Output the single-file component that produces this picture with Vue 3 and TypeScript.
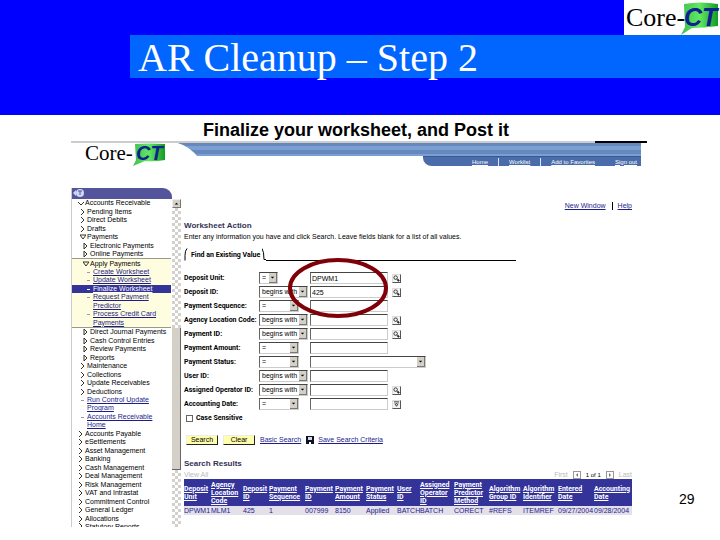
<script setup lang="ts">
import { ref } from 'vue'

interface MenuItem { text: string; kind: 'closed' | 'open' | 'link' | 'more'; level: number; current?: boolean }
interface Field { id: string; label: string; op: string; size: 'tiny' | 'short' | 'long'; value: string; tool?: 'lookup' | 'date'; list?: boolean }

const c = (text: string, level: number): MenuItem => ({ text, kind: 'closed', level })
const topMenu: MenuItem[] = [
  { text: 'Accounts Receivable', kind: 'open', level: 0 },
  c('Pending Items', 1), c('Direct Debits', 1), c('Drafts', 1),
  { text: 'Payments', kind: 'open', level: 1 },
  c('Electronic Payments', 2), c('Online Payments', 2),
]
const applyMenu: MenuItem[] = [
  { text: 'Apply Payments', kind: 'open', level: 2 },
  { text: 'Create Worksheet', kind: 'link', level: 3 },
  { text: 'Update Worksheet', kind: 'link', level: 3 },
  { text: 'Finalize Worksheet', kind: 'link', level: 3, current: true },
  { text: 'Request Payment', kind: 'link', level: 3 },
  { text: 'Predictor', kind: 'more', level: 3 },
  { text: 'Process Credit Card', kind: 'link', level: 3 },
  { text: 'Payments', kind: 'more', level: 3 },
]
const restMenu: MenuItem[] = [
  c('Direct Journal Payments', 2), c('Cash Control Entries', 2), c('Review Payments', 2), c('Reports', 2),
  c('Maintenance', 1), c('Collections', 1), c('Update Receivables', 1), c('Deductions', 1),
  { text: 'Run Control Update', kind: 'link', level: 1 },
  { text: 'Program', kind: 'more', level: 1 },
  { text: 'Accounts Receivable', kind: 'link', level: 1 },
  { text: 'Home', kind: 'more', level: 1 },
  c('Accounts Payable', 0), c('eSettlements', 0), c('Asset Management', 0), c('Banking', 0),
  c('Cash Management', 0), c('Deal Management', 0), c('Risk Management', 0), c('VAT and Intrastat', 0),
  c('Commitment Control', 0), c('General Ledger', 0), c('Allocations', 0), c('Statutory Reports', 0),
]
const menus = [
  { name: 'top', items: topMenu },
  { name: 'apply', items: applyMenu },
  { name: 'rest', items: restMenu },
]

const fields = ref<Field[]>([
  { id: 'unit', label: 'Deposit Unit:', op: '=', size: 'tiny', value: 'DPWM1', tool: 'lookup' },
  { id: 'deposit', label: 'Deposit ID:', op: 'begins with', size: 'long', value: '425', tool: 'lookup' },
  { id: 'sequence', label: 'Payment Sequence:', op: '=', size: 'short', value: '' },
  { id: 'agency', label: 'Agency Location Code:', op: 'begins with', size: 'long', value: '', tool: 'lookup' },
  { id: 'payment', label: 'Payment ID:', op: 'begins with', size: 'long', value: '', tool: 'lookup' },
  { id: 'amount', label: 'Payment Amount:', op: '=', size: 'short', value: '' },
  { id: 'status', label: 'Payment Status:', op: '=', size: 'short', value: '', list: true },
  { id: 'user', label: 'User ID:', op: 'begins with', size: 'long', value: '' },
  { id: 'operator', label: 'Assigned Operator ID:', op: 'begins with', size: 'long', value: '', tool: 'lookup' },
  { id: 'date', label: 'Accounting Date:', op: '=', size: 'short', value: '', tool: 'date' },
])

const columns: { width: number; lines: string[]; value: string }[] = [
  { width: 27, lines: ['Deposit', 'Unit'], value: 'DPWM1' },
  { width: 32, lines: ['Agency', 'Location', 'Code'], value: 'MLM1' },
  { width: 26, lines: ['Deposit', 'ID'], value: '425' },
  { width: 36, lines: ['Payment', 'Sequence'], value: '1' },
  { width: 30, lines: ['Payment', 'ID'], value: '007999' },
  { width: 31, lines: ['Payment', 'Amount'], value: '8150' },
  { width: 31, lines: ['Payment', 'Status'], value: 'Applied' },
  { width: 23, lines: ['User', 'ID'], value: 'BATCH' },
  { width: 34, lines: ['Assigned', 'Operator', 'ID'], value: 'BATCH' },
  { width: 35, lines: ['Payment', 'Predictor', 'Method'], value: 'CORECT' },
  { width: 34, lines: ['Algorithm', 'Group ID'], value: '#REFS' },
  { width: 35, lines: ['Algorithm', 'Identifier'], value: 'ITEMREF' },
  { width: 36, lines: ['Entered', 'Date'], value: '09/27/2004' },
  { width: 38, lines: ['Accounting', 'Date'], value: '09/28/2004' },
]
const total = columns.reduce((sum, col) => sum + col.width, 0)
</script>

<template>
  <div class="slide">
    <header class="masthead">
      <svg class="brand" viewBox="0 0 96 35" role="img" aria-label="Core-CT">
        <defs>
          <linearGradient id="leaf" x1="0" x2="1" y1="0" y2="0">
            <stop offset="0" stop-color="#3fbf4f" /><stop offset=".5" stop-color="#62e862" /><stop offset="1" stop-color="#159a25" />
          </linearGradient>
        </defs>
        <rect width="96" height="35" fill="#fff" />
        <path d="M60 4 Q76 1 94 4 L94 26 Q80 28 68 28 L57 35 L61 27 Z" fill="url(#leaf)" />
        <text x="2" y="26" class="brand-word" font-size="26">Core-</text>
        <text x="60" y="26" class="brand-mark" font-size="25">CT</text>
      </svg>
      <div class="band"><h1>AR Cleanup – Step 2</h1></div>
    </header>

    <h2 class="caption">Finalize your worksheet, and Post it</h2>

    <div class="content">
      <section class="window">
        <div class="rule"></div>
        <div class="app-top">
          <svg class="small-brand" viewBox="0 0 82 24" role="img" aria-label="Core-CT">
            <path d="M50 1 Q63 0 80 1 L80 17 Q68 19 60 18 L48 23 L51 17 Z" fill="url(#leaf)" />
            <text x="0" y="17" class="brand-word" font-size="21">Core-</text>
            <text x="51" y="17" class="brand-mark" font-size="20">CT</text>
          </svg>
          <div class="banner">
            <svg class="swoosh" viewBox="0 0 22 13" aria-hidden="true">
              <path d="M0 0H22V13H19Q12 4 0 0Z" fill="#7b9fd4" /><path d="M0 0H22V3H8Q4 1 0 0Z" fill="#6688bb" /><path d="M13 7H22V11H18Z" fill="#6688bb" />
            </svg>
            <div class="stripes"></div>
            <nav class="links">
              <a href="#">Home</a><span></span><a href="#">Worklist</a><span></span><a href="#">Add to Favorites</a><a href="#" class="out">Sign out</a>
            </nav>
          </div>
        </div>

        <div class="app-body">
          <nav class="sidebar">
            <div class="side-head">
              <svg viewBox="0 0 12 10" aria-hidden="true"><path d="M3 2L0 5L3 8Z" fill="#ccd8f4" /><circle cx="7" cy="5" r="4" fill="#ccd8f4" /><path d="M5 3H9M7 3V7" stroke="#54549c" fill="none" /></svg>
            </div>
            <ul v-for="menu in menus" :key="menu.name" :class="['menu', menu.name]">
              <li v-for="(item, i) in menu.items" :key="i" :class="['level' + item.level, item.kind, { current: item.current }]">
                <svg v-if="item.kind === 'closed'" viewBox="0 0 6 6" aria-hidden="true"><path :d="item.level === 2 ? 'M1 0V6L4 3Z' : 'M1 0L4 3L1 6'" /></svg>
                <svg v-else-if="item.kind === 'open'" viewBox="0 0 6 6" aria-hidden="true"><path :d="item.level === 0 ? 'M0 2L3 5L6 2' : 'M0 1H6L3 5Z'" /></svg>
                <i v-else :class="{ dash: item.kind === 'link' }"></i>
                <a href="#">{{ item.text }}</a>
              </li>
            </ul>
          </nav>
          <div class="scrollbar" aria-hidden="true">
            <div class="scroll-button"><svg viewBox="0 0 8 8"><path d="M2 5L4 3L6 5Z" /></svg></div>
            <div class="track before"></div><div class="thumb"></div><div class="track after"></div>
          </div>

          <main>
            <div class="page-links"><a href="#">New Window</a><a href="#">Help</a></div>
            <h3>Worksheet Action</h3>
            <p class="hint">Enter any information you have and click Search. Leave fields blank for a list of all values.</p>
            <div class="tab">
              <svg viewBox="0 0 4 12" aria-hidden="true"><path d="M3 0Q1 2 1 7V12" /></svg>
              <span>Find an Existing Value</span>
              <svg viewBox="0 0 4 12" aria-hidden="true"><path d="M0 0Q2 3 2 11H4" /></svg>
              <div class="tab-line"></div>
            </div>

            <form @submit.prevent>
              <div v-for="f in fields" :key="f.id" class="field">
                <label :for="f.id">{{ f.label }}</label>
                <span class="op-cell">
                  <span :class="['pick', f.size]">
                    <select v-model="f.op" :aria-label="f.label + ' operator'"><option>=</option><option>begins with</option></select>
                    <svg viewBox="0 0 8 10" aria-hidden="true"><path d="M2 4H6L4 6Z" /></svg>
                  </span>
                </span>
                <span v-if="f.list" class="pick wide">
                  <select :id="f.id" v-model="f.value"><option value=""></option></select>
                  <svg viewBox="0 0 8 10" aria-hidden="true"><path d="M2 4H6L4 6Z" /></svg>
                </span>
                <input v-else :id="f.id" v-model="f.value" type="text">
                <button v-if="f.tool" type="button" class="tool" :aria-label="f.tool">
                  <svg v-if="f.tool === 'lookup'" viewBox="0 0 8 8"><circle cx="3" cy="3" r="2" /><path d="M5 5L7 7" stroke-width="2" /></svg>
                  <svg v-else viewBox="0 0 8 8"><path d="M1 1H7M2 3L4 6L6 3M3 3H5" /></svg>
                </button>
              </div>
              <svg class="ring" viewBox="0 0 100 60" aria-hidden="true"><ellipse cx="50" cy="30" rx="48" ry="28" /></svg>
              <div class="check"><input id="case" type="checkbox"><label for="case">Case Sensitive</label></div>
              <div class="actions">
                <button type="submit">Search</button>
                <button type="reset">Clear</button>
                <a href="#">Basic Search</a>
                <svg viewBox="0 0 8 8" aria-hidden="true"><path d="M0 0H8V8H0Z" fill="#112" /><path d="M2 1H6V4H2Z" fill="#cde" /><path d="M3 6H5V8H3Z" fill="#fff" /></svg>
                <a href="#">Save Search Criteria</a>
              </div>
            </form>

            <h3>Search Results</h3>
            <div class="pager">
              <span class="view">View All</span>
              <span>First</span>
              <svg viewBox="0 0 8 8" aria-hidden="true"><path d="M0 0H8V8H0Z" fill="#fff" stroke="#999" stroke-width="2" /><path d="M5 2V6L3 4Z" fill="#777" /></svg>
              <b>1 of 1</b>
              <svg viewBox="0 0 8 8" aria-hidden="true"><path d="M0 0H8V8H0Z" fill="#fff" stroke="#999" stroke-width="2" /><path d="M3 2V6L5 4Z" fill="#777" /></svg>
              <span>Last</span>
            </div>
            <table>
              <colgroup><col v-for="(col, i) in columns" :key="i" :style="{ width: (col.width / total) * 100 + '%' }"></colgroup>
              <thead><tr><th v-for="(col, i) in columns" :key="i" scope="col"><a href="#"><span v-for="line in col.lines" :key="line">{{ line }}</span></a></th></tr></thead>
              <tbody><tr><td v-for="(col, i) in columns" :key="i"><a href="#">{{ col.value }}</a></td></tr></tbody>
            </table>
          </main>
        </div>
      </section>
      <aside class="page-number">29</aside>
    </div>
  </div>
</template>

<style>
body { background: #fff; }
</style>

<style scoped>
* { box-sizing: border-box; }
.slide { font: 7px/8px "Liberation Sans", Arial, sans-serif; color: #000; overflow: hidden; }
h1, h2, h3, p, ul { margin: 0; padding: 0; font-weight: normal; }
svg { display: block; flex: none; }
a { color: #1c1c8c; white-space: nowrap; }
.masthead { background: #00f; padding-bottom: 37px; display: flex; flex-direction: column; }
.brand { width: 96px; height: 35px; align-self: flex-end; }
.brand-word { font-family: "Liberation Serif", serif; fill: #000; }
.brand-mark { font-family: "Liberation Sans", sans-serif; font-weight: bold; font-style: italic; fill: #102090; }
.band { background: #06f; margin-left: 130px; padding-left: 8px; height: 43px; }
h1 { font: 40px/46px "Liberation Serif", serif; color: #fff; white-space: nowrap; }
.caption { font-size: 18px; line-height: 26px; font-weight: bold; padding: 2px 0 0 203px; height: 26px; white-space: nowrap; }
.content { display: grid; grid-template-columns: 1fr 73px; padding-left: 71px; }
.rule { height: 2px; background: linear-gradient(90deg, #ccc 0 91%, #000 91%); }
.app-top { display: flex; height: 45px; margin-right: 6px; padding-left: 14px; }
.small-brand { width: 82px; height: 24px; margin-right: 11px; overflow: visible; }
.banner { flex: 1; display: grid; grid-template-columns: 22px 1fr; align-content: start; }
.swoosh { width: 22px; height: 13px; }
.stripes { height: 13px; background: linear-gradient(#6688bb 0 3px, #7b9fd4 3px 7px, #6688bb 7px 11px, #7b9fd4 11px); }
.links { grid-column: 1 / 3; justify-self: end; width: 218px; height: 10px; background: #4a6cab; border-top: 1px solid #385994; border-bottom-left-radius: 9px 8px; display: flex; justify-content: flex-end; align-items: center; gap: 10px; padding-right: 4px; }
.links a { color: #fff; font-size: 6px; line-height: 8px; }
.links span { width: 1px; height: 8px; background: #dde6f8; }
.links .out { margin-left: 10px; }
.app-body { display: flex; height: 339px; margin-right: 6px; }
.sidebar { width: 101px; display: flex; flex-direction: column; border-left: 1px solid #ccc; overflow: hidden; }
.side-head { height: 11px; background: #54549c; border-top-right-radius: 9px; padding: 0 1px; }
.side-head svg { width: 12px; height: 10px; }
.menu { list-style: none; display: flex; flex-direction: column; margin-right: 1px; }
.top { flex: 14 1 0; }
.apply { flex: 16 1 0; background: #fffde0; border-top: 1px solid #998; border-bottom: 1px solid #998; }
.rest { flex: 47 1 0; overflow: hidden; }
.menu li { flex: 2 1 0; min-height: 0; display: flex; align-items: center; gap: 1px; }
.rest li:last-child { flex-grow: 1; align-items: flex-start; }
.menu li svg, .menu li i { width: 6px; height: 6px; flex: none; }
.menu li svg path { fill: none; stroke: #332; stroke-width: 1; }
.closed a, .open a { color: #000; text-decoration: none; }
.level0 { padding-left: 6px; }
.level1 { padding-left: 8px; }
.level2 { padding-left: 11px; }
.level3 { padding-left: 14px; }
.dash::before { content: ""; display: block; width: 3px; height: 1px; margin: 3px 0 0 1px; background: #99a; }
.current { background: #339; }
.current a { color: #fff; }
.current .dash::before { background: #fff; }
.scrollbar { width: 9px; padding-top: 11px; display: flex; flex-direction: column; }
.scroll-button { height: 9px; background: #d4d0c8; border: 1px solid #777; border-top-color: #eee; border-left-color: #eee; }
.scroll-button svg { width: 7px; height: 7px; }
.track { background: repeating-conic-gradient(#d4d0cc 0 25%, #fff 0 50%) 0 0 / 6px 6px; }
.before { flex: 120; }
.thumb { flex: 142; background: #d4d0c8; border-right: 1px solid #666; border-bottom: 1px solid #666; }
.after { flex: 57; }
main { flex: 1; min-width: 0; padding: 14px 9px 0 3px; }
.page-links { display: flex; justify-content: flex-end; padding-bottom: 10px; }
.page-links a + a { border-left: 1px solid #000; margin-left: 6px; padding-left: 5px; }
h3 { font-size: 8px; line-height: 12px; font-weight: bold; color: #335; }
.hint { height: 16px; line-height: 10px; white-space: nowrap; }
.tab { display: flex; height: 13px; margin-bottom: 10px; font: bold 7px/14px Roboto, sans-serif; white-space: nowrap; }
.tab svg { width: 4px; height: 13px; }
.tab svg path { fill: none; stroke: #000; }
.tab span { padding: 0 2px 0 3px; }
.tab-line { width: 250px; border-bottom: 1px solid #000; }
form { position: relative; }
.field { display: grid; grid-template-columns: 75px 51px auto auto 1fr; align-items: center; height: 14px; }
label { font: bold 7px/8px Roboto, sans-serif; white-space: nowrap; }
.op-cell { display: flex; }
.pick { position: relative; display: block; height: 12px; }
.tiny { width: 19px; }
.short { width: 40px; }
.long { width: 49px; }
.wide { width: 116px; }
select, input { font: 7px/8px "Liberation Sans", Arial, sans-serif; color: #000; margin: 0; background: #fff; border: 1px solid #ccc; border-top-color: #444; border-left-color: #666; border-radius: 0; }
select { appearance: none; display: block; width: 100%; height: 12px; padding: 0 0 0 2px; }
.pick svg { position: absolute; right: 1px; top: 1px; width: 8px; height: 10px; background: #d4d0c8; border-right: 1px solid #777; border-bottom: 1px solid #777; }
.field input { width: 78px; height: 12px; padding: 0 1px; }
.tool { width: 9px; height: 9px; margin-left: 4px; padding: 0; border: 1px solid #ddd; border-right-color: #555; border-bottom-color: #555; background: #f4f4f4; }
.tool svg { width: 7px; height: 7px; fill: none; stroke: #222; }
.ring { position: absolute; left: 104px; top: -13px; width: 100px; height: 60px; fill: none; stroke: #800008; stroke-width: 4; pointer-events: none; }
.check { display: flex; align-items: center; height: 14px; gap: 3px; }
.check input { appearance: none; width: 7px; height: 7px; margin-left: 2px; border: 1px solid #666; }
.actions { display: flex; align-items: center; height: 11px; margin: 9px 0 13px 2px; }
.actions button { width: 32px; height: 10px; margin-right: 5px; padding: 0; font: 7px/8px "Liberation Sans", Arial, sans-serif; background: #ffffae; border: 1px solid #eed; border-right-color: #222; border-bottom-color: #222; }
.actions svg { width: 8px; height: 8px; margin: 0 4px 0 5px; }
.pager { display: flex; align-items: center; height: 10px; color: #bbb; gap: 5px; margin-bottom: -1px; }
.pager .view { margin-right: auto; }
.pager b { color: #000; font-weight: normal; font-size: 6px; }
.pager svg { width: 8px; height: 8px; }
table { width: 100%; table-layout: fixed; border-collapse: collapse; }
th { height: 27px; padding: 0; background: #339; font: bold 7px/8px Roboto, sans-serif; text-align: left; vertical-align: middle; }
th a { color: #fff; }
th span { display: block; }
td { height: 9px; padding: 0; background: #e4e0ea; line-height: 9px; }
td a { color: #1c1c8c; text-decoration: none; }
.page-number { align-self: end; padding: 0 0 20px 32px; font-size: 14px; line-height: 16px; }
</style>
